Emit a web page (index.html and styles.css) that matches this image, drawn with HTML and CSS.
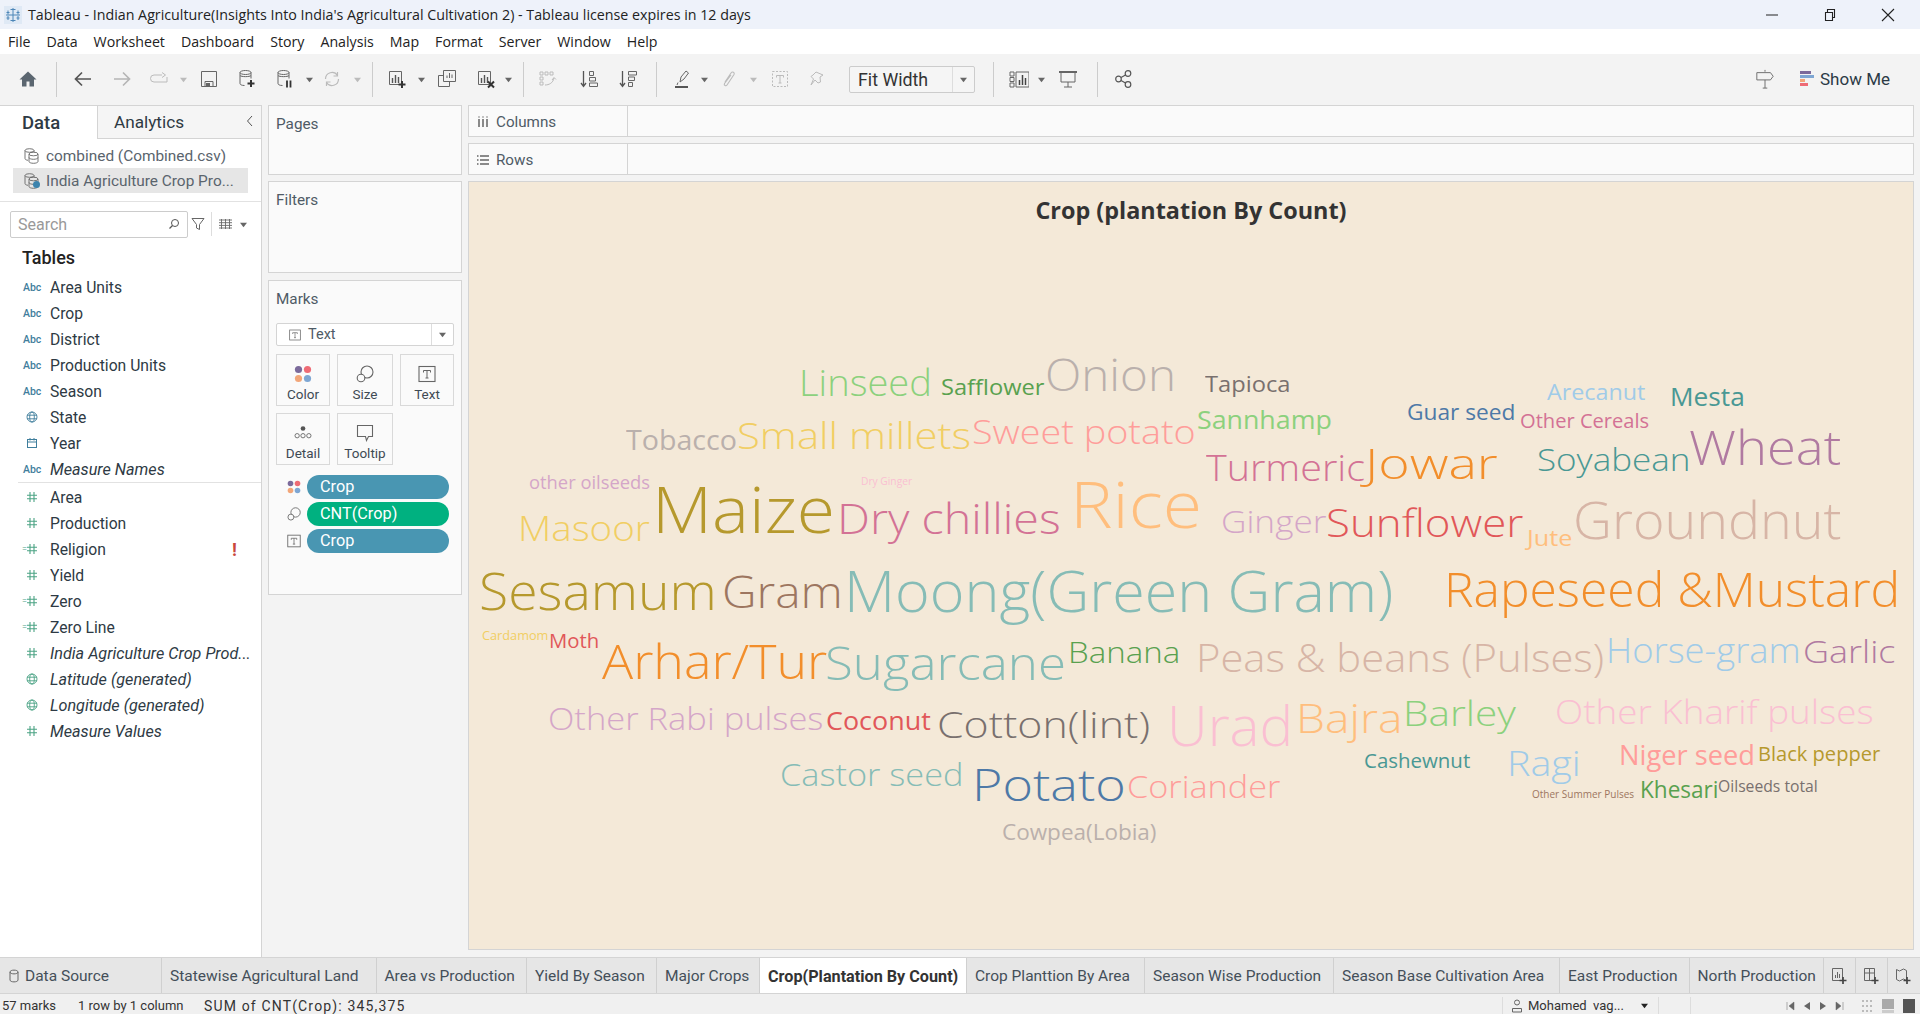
FILE: index.html
```html
<!DOCTYPE html>
<html lang="en">
<head>
    <meta charset="UTF-8">
    <title>Tableau - Indian Agriculture</title>
    <link rel="stylesheet" href="styles.css">
</head>
<body>
    <svg class="sprite" width="0" height="0">
        <symbol id="caret" viewBox="0 0 8 8"><path d="M0 2h8L4 7z"/></symbol>
        <symbol id="hash" viewBox="0 0 12 12"><path d="M4 1v10M8 1v10M1 4.2h10M1 7.8h10" fill="none" stroke="currentColor" stroke-width="1.1"/></symbol>
        <symbol id="globe" viewBox="0 0 12 12"><g fill="none" stroke="currentColor" stroke-width=".9"><circle cx="6" cy="6" r="5"/><ellipse cx="6" cy="6" rx="2.3" ry="5"/><path d="M1 4.2h10M1 7.8h10"/></g></symbol>
        <symbol id="cal" viewBox="0 0 12 12"><g fill="none" stroke="currentColor" stroke-width="1"><rect x="1.5" y="2.5" width="9" height="8"/><path d="M1.5 5h9M4 1v2.5M8 1v2.5"/></g></symbol>
        <symbol id="dots" viewBox="0 0 16 16"><circle cx="4" cy="4" r="3.2" fill="#7b6a9b"/><circle cx="12" cy="4" r="3.2" fill="#ee6b75"/><circle cx="4" cy="12" r="3.2" fill="#f2a679"/><circle cx="12" cy="12" r="3.2" fill="#7ea6d3"/></symbol>
        <symbol id="size" viewBox="0 0 18 18"><g fill="none" stroke="#666" stroke-width="1.1"><circle cx="11" cy="7" r="6"/><circle cx="5" cy="13" r="3.8" fill="#fafafa"/></g></symbol>
        <symbol id="tbox" viewBox="0 0 18 18"><rect x="1" y="1.5" width="16" height="15" fill="none" stroke="#666" stroke-width="1.1"/><path d="M5.5 5.5h7v2M9 5.500v7.500M7.500 13h3M5.500 5.500v2" fill="none" stroke="#666"/></symbol>
        <symbol id="db" viewBox="0 0 15 16"><g fill="none" stroke="currentColor" stroke-width=".9"><ellipse cx="5.500" cy="2.500" rx="4.500" ry="1.800"/><path d="M1 2.500v8c0 1 1.200 1.600 3 1.800M10 2.500v2"/><ellipse cx="9.500" cy="6" rx="4.500" ry="1.800"/><path d="M5 6v7.500c0 1 2 1.800 4.500 1.800s4.500-.8 4.500-1.800V6M5 9.500c0 1 2 1.800 4.500 1.800s4.500-.8 4.500-1.800"/></g></symbol>
    </svg>

    <div class="titlebar">
        <svg class="app-icon" viewBox="0 0 18 18"><rect width="18" height="18" fill="#dfe9f5"/><path d="M9 2v14M2 9h14M4 4.500v4M2.500 6.500h3M14 4.500v4M12.500 6.500h3M4 10v4M2.500 12h3M14 10v4M12.500 12h3M6.500 3.500h5M6.500 14.500h5" stroke="#4d86b8" fill="none"/></svg>
        <span class="app-title">Tableau - Indian Agriculture(Insights Into India's Agricultural Cultivation 2) - Tableau license expires in 12 days</span>
        <div class="win-controls">
            <svg viewBox="0 0 14 14"><path d="M1 7h12" stroke="#222"/></svg>
            <svg viewBox="0 0 14 14"><path d="M2.500 4.500h7v8h-7zM4.500 4.500v-3h7v8h-2" fill="none" stroke="#222" stroke-width="1.100"/></svg>
            <svg viewBox="0 0 14 14"><path d="M1 1l12 12M13 1L1 13" stroke="#222" stroke-width="1.100"/></svg>
        </div>
    </div>

    <div class="menubar">
        <span>File</span><span>Data</span><span>Worksheet</span><span>Dashboard</span><span>Story</span><span>Analysis</span><span>Map</span><span>Format</span><span>Server</span><span>Window</span><span>Help</span>
    </div>

    <div class="toolbar">
        <svg class="ti" viewBox="0 0 20 20"><path d="M10 2.500L1.500 10.500h2.500v7h4.500v-5h3v5h4.500v-7h2.500z" fill="#5b6670"/></svg>
        <i class="sep"></i>
        <svg class="ti" viewBox="0 0 20 20"><path d="M18 10H3M9 3.500L2.500 10 9 16.500" fill="none" stroke="#555" stroke-width="1.700"/></svg>
        <svg class="ti off" viewBox="0 0 20 20"><path d="M2 10h15M11 3.500l6.500 6.500-6.500 6.500" fill="none" stroke="#b5b5b5" stroke-width="1.700"/></svg>
        <svg class="ti" viewBox="0 0 20 20"><path d="M13 6H5a3.500 3.500 0 0 0 0 7h13V8M13 3.500L16.500 6 13 8.500" fill="none" stroke="#bbb"/></svg>
        <svg class="tc off"><use href="#caret"/></svg>
        <svg class="ti" viewBox="0 0 20 20"><path d="M2.500 2.500h15v15h-15zM6 17.500v-5h8v5" fill="none" stroke="#666"/><rect x="7" y="14" width="4" height="3" fill="#666"/></svg>
        <svg class="ti" viewBox="0 0 20 20"><g fill="none" stroke="#666"><ellipse cx="8.500" cy="3.500" rx="5.500" ry="2"/><path d="M3 3.500v11c0 1 1.500 2 4.500 2M14 3.500v6M3 6.500c1 1.500 10 1.500 11 0"/></g><path d="M14 11v7M10.500 14.500h7" stroke="#333" stroke-width="2"/></svg>
        <svg class="ti" viewBox="0 0 20 20"><g fill="none" stroke="#666"><ellipse cx="8.500" cy="3.500" rx="5.500" ry="2"/><path d="M3 3.500v11c0 1 1.500 2 4.500 2M14 3.500v6M3 6.500c1 1.500 10 1.500 11 0"/></g><path d="M12 11.500v7M15.500 11.500v7" stroke="#333" stroke-width="1.800"/></svg>
        <svg class="tc"><use href="#caret"/></svg>
        <svg class="ti off" viewBox="0 0 20 20"><path d="M3.500 10a6.500 6.500 0 0 1 12-3.500M16.500 10a6.500 6.500 0 0 1-12 3.500M15.500 3v4h-4M4.500 17v-4h4" fill="none" stroke="#bbb" stroke-width="1.200"/></svg>
        <svg class="tc off"><use href="#caret"/></svg>
        <i class="sep"></i>
        <svg class="ti" viewBox="0 0 20 20"><path d="M2.500 2.500h12v13h-12z" fill="none" stroke="#666"/><path d="M5.500 9v5M8.500 6v8M11.500 8v6" stroke="#555" stroke-width="1.400"/><path d="M15 12v7M11.500 15.500h7" stroke="#333" stroke-width="2"/></svg>
        <svg class="tc"><use href="#caret"/></svg>
        <svg class="ti" viewBox="0 0 20 20"><g fill="none" stroke="#666"><path d="M6.500 1.500h12v11h-12z"/><path d="M1.500 6.500h5M1.500 6.500v11h11v-5"/></g><path d="M10 9V6.500M12.500 9V4M15 9V5.500" stroke="#666"/></svg>
        <svg class="ti" viewBox="0 0 20 20"><path d="M2.500 2.500h12v13h-12z" fill="none" stroke="#666"/><path d="M5.500 9v5M8.500 6v8M11.500 8v6" stroke="#555" stroke-width="1.400"/><path d="M12 12.500l6 6M18 12.500l-6 6" stroke="#333" stroke-width="2"/></svg>
        <svg class="tc"><use href="#caret"/></svg>
        <i class="sep"></i>
        <svg class="ti off" viewBox="0 0 20 20"><path d="M3 3h3v3H3zM8 3h3v3H8zM13 3h3v3h-3zM3 8h3v3H3zM3 13h3v3H3zM8 16c4 0 8-2 9-7M15 11l2-2.500 2 2" fill="none" stroke="#bbb"/></svg>
        <svg class="ti" viewBox="0 0 20 20"><path d="M4.500 2v15M2 14l2.500 3.500L7 14" fill="none" stroke="#555" stroke-width="1.300"/><path d="M10.500 2.500h4v4h-4zM10.500 8.500h6v3.500h-6zM10.500 14h8v3.500h-8z" fill="none" stroke="#666"/></svg>
        <svg class="ti" viewBox="0 0 20 20"><path d="M4.500 2v15M2 14l2.500 3.500L7 14" fill="none" stroke="#555" stroke-width="1.300"/><path d="M10.500 2.500h8v3.500h-8zM10.500 8h6v3.500h-6zM10.500 13.500h4v4h-4z" fill="none" stroke="#666"/></svg>
        <i class="sep"></i>
        <svg class="ti" viewBox="0 0 20 20"><path d="M7 13l1-5 5-6 2.500 2-4.500 6zM5 13.500l-1 2.500" fill="none" stroke="#666"/><rect x="2" y="17" width="13" height="2" fill="#555"/></svg>
        <svg class="tc"><use href="#caret"/></svg>
        <svg class="ti" viewBox="0 0 20 20"><path d="M6 13l6-9c1.500-2 4-.5 3 1.500L8 16c-1 1.500-3.500.5-2.500-1.500L12 6" fill="none" stroke="#bbb" stroke-width="1.100"/></svg>
        <svg class="tc off"><use href="#caret"/></svg>
        <svg class="ti off" viewBox="0 0 20 20"><path d="M2.500 2.500h15v15h-15z" fill="none" stroke="#bbb" stroke-dasharray="2 1.500"/><path d="M6.500 6.500h7v2M10 6.500v7.500M8.500 14h3M6.500 6.500v2" fill="none" stroke="#bbb"/></svg>
        <svg class="ti off" viewBox="0 0 20 20"><path d="M9 3l7 3-3 2 .5 5-2.500 1-3-3-4 5 2.500-6-2.500-2.500 2-1.500z" fill="none" stroke="#bbb"/></svg>
        <div class="fit-box"><span>Fit Width</span><b><svg class="tc"><use href="#caret"/></svg></b></div>
        <i class="sep"></i>
        <svg class="ti" viewBox="0 0 20 20"><path d="M1 3h4v4H1zM1 8.500h4v4H1zM1 14h4v4H1zM7 3h13v15H7z" fill="none" stroke="#666"/><path d="M10.500 11v5M13.500 6v10M16.500 9v7" stroke="#444" stroke-width="1.500"/></svg>
        <svg class="tc"><use href="#caret"/></svg>
        <svg class="ti" viewBox="0 0 20 20"><path d="M1 3h18" stroke="#555" stroke-width="1.800"/><path d="M3 3v10h14V3M10 13v5M6 18h8" fill="none" stroke="#666"/></svg>
        <i class="sep"></i>
        <svg class="ti" viewBox="0 0 20 20"><g fill="none" stroke="#555" stroke-width="1.200"><circle cx="14" cy="4.500" r="2.800"/><circle cx="4.500" cy="10" r="2.800"/><circle cx="14" cy="15.500" r="2.800"/><path d="M7 8.500l4.500-2.500M7 11.500l4.500 2.500"/></g></svg>
        <div class="toolbar-right">
            <svg class="ti" viewBox="0 0 20 22"><path d="M10 1v2M1 4h15l3 4-3 4H1zM10 12v9M7.500 21h5" fill="none" stroke="#666"/></svg>
            <div class="showme">
                <div class="bars"><i class="b1"></i><i class="b2"></i><i class="b3"></i><i class="b4"></i></div>
                <span>Show Me</span>
            </div>
        </div>
    </div>

    <div class="main">
        <aside class="data-pane">
            <div class="pane-tabs">
                <div class="pane-tab active">Data</div>
                <div class="pane-tab">Analytics<svg class="chev" viewBox="0 0 8 12"><path d="M6 1L1.500 6 6 11" fill="none" stroke="#555"/></svg></div>
            </div>
            <div class="sources">
                <div class="source"><svg class="src-icon"><use href="#db"/></svg>combined (Combined.csv)</div>
                <div class="source selected"><svg class="src-icon"><use href="#db"/></svg><span class="src-check"></span>India Agriculture Crop Pro...</div>
            </div>
            <div class="search-row">
                <div class="search"><span>Search</span><svg viewBox="0 0 12 12"><circle cx="7" cy="5" r="3.500" fill="none" stroke="#555"/><path d="M4.500 7.500L1.500 10.500" stroke="#555" stroke-width="1.300"/></svg></div>
                <svg class="funnel" viewBox="0 0 14 14"><path d="M1 1.500h12L8.500 7.500v5l-3-1.500V7.500z" fill="none" stroke="#666"/></svg>
                <i class="vline"></i>
                <svg class="list-icon" viewBox="0 0 13 10"><path d="M0 1h13M0 3.700h13M0 6.400h13M0 9h13M2.500 0v10M6.500 0v10M10.500 0v10" stroke="#666" stroke-width=".9"/></svg>
                <svg class="tc"><use href="#caret"/></svg>
            </div>
            <h3 class="tables">Tables</h3>
            <ul class="fields dims">
                <li><span class="abc">Abc</span>Area Units</li>
                <li><span class="abc">Abc</span>Crop</li>
                <li><span class="abc">Abc</span>District</li>
                <li><span class="abc">Abc</span>Production Units</li>
                <li><span class="abc">Abc</span>Season</li>
                <li><svg class="fi blue"><use href="#globe"/></svg>State</li>
                <li><svg class="fi blue"><use href="#cal"/></svg>Year</li>
                <li class="it"><span class="abc">Abc</span>Measure Names</li>
            </ul>
            <ul class="fields meas">
                <li><svg class="fi"><use href="#hash"/></svg>Area</li>
                <li><svg class="fi"><use href="#hash"/></svg>Production</li>
                <li><span class="calc">=</span><svg class="fi"><use href="#hash"/></svg>Religion<span class="warn">!</span></li>
                <li><svg class="fi"><use href="#hash"/></svg>Yield</li>
                <li><span class="calc">=</span><svg class="fi"><use href="#hash"/></svg>Zero</li>
                <li><span class="calc">=</span><svg class="fi"><use href="#hash"/></svg>Zero Line</li>
                <li class="it"><svg class="fi"><use href="#hash"/></svg>India Agriculture Crop Prod...</li>
                <li class="it"><svg class="fi"><use href="#globe"/></svg>Latitude (generated)</li>
                <li class="it"><svg class="fi"><use href="#globe"/></svg>Longitude (generated)</li>
                <li class="it"><svg class="fi"><use href="#hash"/></svg>Measure Values</li>
            </ul>
        </aside>

        <section class="cards">
            <div class="card pages"><label>Pages</label></div>
            <div class="card filters"><label>Filters</label></div>
            <div class="card marks">
                <label>Marks</label>
                <div class="mark-type">
                    <svg viewBox="0 0 18 18"><use href="#tbox"/></svg>
                    <span>Text</span>
                    <b><svg class="tc"><use href="#caret"/></svg></b>
                </div>
                <div class="mark-btns">
                    <div class="mark-btn"><svg><use href="#dots"/></svg>Color</div>
                    <div class="mark-btn"><svg><use href="#size"/></svg>Size</div>
                    <div class="mark-btn"><svg><use href="#tbox"/></svg>Text</div>
                    <div class="mark-btn"><svg viewBox="0 0 20 18"><circle cx="10" cy="4" r="2.600" fill="#555"/><g fill="none" stroke="#666"><circle cx="3.500" cy="12" r="2.400"/><circle cx="10" cy="12" r="2.400"/><circle cx="16.500" cy="12" r="2.400"/></g></svg>Detail</div>
                    <div class="mark-btn"><svg viewBox="0 0 18 18"><path d="M1.500 1.500h15v11h-4l-2 4-1-4h-8z" fill="none" stroke="#666" stroke-width="1.100"/></svg>Tooltip</div>
                </div>
                <div class="pills">
                    <div class="pill-row"><svg><use href="#dots"/></svg><div class="pill blue-pill">Crop</div></div>
                    <div class="pill-row"><svg><use href="#size"/></svg><div class="pill green-pill">CNT(Crop)</div></div>
                    <div class="pill-row"><svg><use href="#tbox"/></svg><div class="pill blue-pill">Crop</div></div>
                </div>
            </div>
        </section>

        <section class="view">
            <div class="shelf"><div class="shelf-label"><svg viewBox="0 0 12 12"><path d="M2 3v8M6 3v8M10 3v8" stroke="#666" stroke-width="1.500"/><path d="M2 .5v1M6 .5v1M10 .5v1" stroke="#666" stroke-width="1.500"/></svg>Columns</div></div>
            <div class="shelf"><div class="shelf-label"><svg viewBox="0 0 12 12"><path d="M3 2h9M3 6h9M3 10h9" stroke="#666" stroke-width="1.300"/><path d="M0 2h1.500M0 6h1.500M0 10h1.500" stroke="#666" stroke-width="1.300"/></svg>Rows</div></div>
            <div class="canvas" id="canvas">
                <h2 class="viz-title">Crop (plantation By Count)</h2>
            </div>
        </section>
    </div>

    <div class="tabs">
        <div class="tab ds"><svg viewBox="0 0 10 14"><path d="M1 3v8c0 2.500 8 2.500 8 0V3c0-2.500-8-2.500-8 0zM1 3c0 2.500 8 2.500 8 0" fill="none" stroke="#666"/></svg>Data Source</div>
        <div class="tab">Statewise Agricultural Land</div>
        <div class="tab">Area vs Production</div>
        <div class="tab">Yield By Season</div>
        <div class="tab">Major Crops</div>
        <div class="tab active">Crop(Plantation By Count)</div>
        <div class="tab">Crop Planttion By Area</div>
        <div class="tab">Season Wise Production</div>
        <div class="tab">Season Base Cultivation Area</div>
        <div class="tab">East Production</div>
        <div class="tab">North Production</div>
        <div class="tab add"><svg viewBox="0 0 18 18"><path d="M2.500 1.500h10v12h-10z" fill="none" stroke="#666"/><path d="M5.500 8v3M7.500 5v6M9.500 7v4" stroke="#666"/><path d="M13 10v7M9.500 13.500h7" stroke="#444" stroke-width="1.700"/></svg></div>
        <div class="tab add"><svg viewBox="0 0 18 18"><path d="M2.500 1.500h10v12h-10zM2.500 6h10M7.500 1.500v12" fill="none" stroke="#666"/><path d="M13 10v7M9.500 13.500h7" stroke="#444" stroke-width="1.700"/></svg></div>
        <div class="tab add"><svg viewBox="0 0 18 18"><path d="M2.500 2.500l3 1.500 4-2 3 1.500v10l-3-1.500-4 2-3-1.500z" fill="none" stroke="#666"/><path d="M13 10v7M9.500 13.500h7" stroke="#444" stroke-width="1.700"/></svg></div>
    </div>

    <div class="statusbar">
        <span class="st-marks">57 marks</span>
        <span class="st-rows">1 row by 1 column</span>
        <span class="st-sum">SUM of CNT(Crop): 345,375</span>
        <div class="st-user">
            <svg viewBox="0 0 12 14"><circle cx="6" cy="3.500" r="2.500" fill="none" stroke="#666"/><path d="M1.500 13V9.500h9V13z" fill="none" stroke="#666"/></svg>
            <span>Mohamed &nbsp;vag...</span>
            <svg class="tc dark"><use href="#caret"/></svg>
        </div>
        <div class="st-cell"></div>
        <div class="st-cell"></div>
        <div class="st-nav">
            <svg viewBox="0 0 10 10"><path d="M2 1v8M9 1L4 5l5 4z" fill="#666" stroke="#666" stroke-width=".5"/></svg>
            <svg viewBox="0 0 10 10"><path d="M8 1L2 5l6 4z" fill="#666"/></svg>
            <svg viewBox="0 0 10 10"><path d="M2 1l6 4-6 4z" fill="#666"/></svg>
            <svg viewBox="0 0 10 10"><path d="M8 1v8M1 1l5 4-5 4z" fill="#666" stroke="#666" stroke-width=".5"/></svg>
        </div>
        <div class="st-views">
            <svg viewBox="0 0 12 14"><path d="M1 1h2v2H1zM5 1h2v2H5zM9 1h2v2H9zM1 6h2v2H1zM5 6h2v2H5zM9 6h2v2H9zM1 11h2v2H1zM5 11h2v2H5zM9 11h2v2H9z" fill="#bbb"/></svg>
            <svg viewBox="0 0 12 14"><rect x="0" y="0" width="12" height="10" fill="#aaa"/><rect x="0" y="11" width="12" height="3" fill="#ccc"/></svg>
            <svg viewBox="0 0 12 14"><rect width="12" height="14" fill="#555"/></svg>
        </div>
    </div>

    <script src="words.js"></script>
</body>
</html>
```

FILE: styles.css
```css
* {
    box-sizing: border-box;
}
html, body {
    height: 100%;
}
body {
    margin: 0;
    width: 1920px;
    height: 1014px;
    overflow: hidden;
    display: flex;
    flex-direction: column;
    font-family: 'Roboto', 'Liberation Sans', sans-serif;
    font-size: 15.700px;
    color: #2e3a44;
    background: #f3f3f3;
}
ul {
    list-style: none;
    margin: 0;
    padding: 0;
}
.sprite {
    position: absolute;
}

/* title + menu */
.titlebar {
    height: 29px;
    display: flex;
    align-items: center;
    background: #eef2fa;
    padding-left: 4px;
    font-family: 'Open Sans', sans-serif;
    font-size: 14.250px;
    color: #222;
}
.app-icon {
    width: 18px;
    height: 18px;
    margin-right: 6px;
}
.win-controls {
    margin-left: auto;
    display: flex;
    gap: 44px;
    padding-right: 25px;
}
.win-controls svg {
    width: 14px;
    height: 14px;
}
.menubar {
    height: 25px;
    background: #fff;
    display: flex;
    align-items: center;
    gap: 16px;
    padding-left: 8px;
    font-family: 'Open Sans', sans-serif;
    font-size: 14.200px;
    color: #222;
}

/* toolbar, one track per icon */
.toolbar {
    height: 51px;
    padding: 0 0 1px 8px;
    display: grid;
    align-items: center;
    justify-items: center;
    grid-template-columns: 40px 17px 36px 42px 32px 16px 36px 40px 36px 12px 34px 16px 14px 36px 12px 40px 38px 6px 24px 24px 60px 18px 38px 16px 26px 24px 24px 30px 44px 146px 16px 36px 8px 46px 12px 42px 1fr;
    background: #f3f3f3;
}
.ti {
    width: 20px;
    height: 20px;
}
.tc {
    width: 7px;
    height: 7px;
    fill: #666;
}
.tc.off {
    fill: #bbb;
}
.tc.dark {
    fill: #222;
}
.sep {
    display: block;
    width: 1px;
    height: 35px;
    background: #ccc;
}
.fit-box {
    width: 126px;
    height: 27px;
    display: flex;
    align-items: center;
    background: #f5f5f5;
    border: 1px solid #ccc;
    border-radius: 2px;
    font-size: 17.800px;
    color: #333;
}
.fit-box span {
    flex: 1;
    padding-left: 8px;
}
.fit-box b {
    width: 22px;
    height: 100%;
    display: flex;
    align-items: center;
    justify-content: center;
    border-left: 1px solid #ddd;
}
.toolbar-right {
    justify-self: end;
    display: flex;
    align-items: center;
    padding-right: 30px;
}
.showme {
    display: flex;
    align-items: center;
    gap: 6px;
    margin-left: 25px;
    font-size: 17px;
    color: #2c3a46;
}
.bars {
    width: 14px;
}
.bars i {
    display: block;
    height: 3px;
    margin-bottom: 1px;
}
.bars .b1 { width: 11px; background: #7b6a9b; }
.bars .b2 { width: 14px; background: #7ea6d3; }
.bars .b3 { width: 5px; background: #f2a679; }
.bars .b4 { width: 8px; background: #ee6b75; }

/* main area */
.main {
    flex: 1;
    min-height: 0;
    display: flex;
}
.data-pane {
    width: 262px;
    background: #fff;
    border-right: 1px solid #d4d4d4;
    border-top: 1px solid #d4d4d4;
}
.pane-tabs {
    display: flex;
    height: 33px;
}
.pane-tab {
    display: flex;
    align-items: center;
    font-size: 17.200px;
    background: #f5f5f5;
    border-bottom: 1px solid #d4d4d4;
    flex: 1;
    padding-left: 16px;
    position: relative;
}
.pane-tab.active {
    flex: 0 0 98px;
    padding-left: 22px;
    background: #fff;
    font-size: 18.500px;
    font-weight: 500;
    border-bottom: 0;
    border-right: 1px solid #d4d4d4;
}
.chev {
    position: absolute;
    right: 7px;
    top: 9px;
    width: 8px;
    height: 12px;
}
.sources {
    padding: 4px 13px 8px;
    border-bottom: 1px solid #e2e2e2;
}
.source {
    height: 25px;
    display: flex;
    align-items: center;
    color: #5a646d;
    font-size: 15.400px;
    position: relative;
    white-space: nowrap;
}
.source.selected {
    background: #e6e6e6;
}
.src-icon {
    width: 15px;
    height: 16px;
    margin: 0 7px 0 11px;
    color: #666;
}
.src-check {
    position: absolute;
    left: 20px;
    top: 13px;
    width: 7px;
    height: 7px;
    border-radius: 50%;
    background: #3c83ad;
}
.search-row {
    display: flex;
    align-items: center;
    padding: 8px 0 0 10px;
    height: 36px;
}
.search {
    width: 178px;
    height: 27px;
    display: flex;
    align-items: center;
    justify-content: space-between;
    padding: 0 7px;
    border: 1px solid #ccc;
    border-radius: 2px;
    color: #999;
    font-size: 16px;
}
.search svg {
    width: 12px;
    height: 12px;
}
.funnel {
    width: 14px;
    height: 14px;
    margin-left: 3px;
}
.vline {
    width: 1px;
    height: 24px;
    background: #ddd;
    margin: 0 7px 0 6px;
}
.list-icon {
    width: 13px;
    height: 10px;
    margin-right: 8px;
}
.tables {
    margin: 10px 0 6px 22px;
    font-size: 18px;
    line-height: 20px;
    font-weight: 500;
    color: #222;
}
.fields li {
    height: 26px;
    display: flex;
    align-items: center;
    position: relative;
    padding-left: 50px;
    white-space: nowrap;
}
.fields .it {
    font-style: italic;
    font-size: 16.200px;
}
.dims {
    border-bottom: 1px solid #e2e2e2;
    margin-left: 18px;
}
.dims li {
    margin-left: -18px;
}
.meas {
    padding-top: 1px;
}
.abc {
    position: absolute;
    left: 23px;
    font-size: 10.500px;
    font-style: normal;
    font-weight: 500;
    color: #3f7e9c;
}
.fi {
    position: absolute;
    left: 26px;
    width: 12px;
    height: 12px;
    color: #4ba384;
}
.fi.blue {
    color: #3f7e9c;
}
.calc {
    position: absolute;
    left: 22px;
    font-size: 9px;
    font-style: normal;
    color: #4ba384;
}
.warn {
    position: absolute;
    left: 232px;
    font-size: 18px;
    font-weight: 700;
    color: #c9473c;
}

/* cards column */
.cards {
    width: 194px;
    margin-left: 6px;
    display: flex;
    flex-direction: column;
    gap: 6px;
}
.card {
    background: #fafafa;
    border: 1px solid #d4d4d4;
    padding: 9px 7px;
}
.card label {
    display: block;
    font-size: 15.300px;
    line-height: 18px;
    color: #4f5b66;
}
.pages {
    height: 70px;
}
.filters {
    height: 92px;
}
.marks {
    height: 315px;
    margin-top: 1px;
}
.mark-type {
    margin-top: 15px;
    height: 23px;
    display: flex;
    align-items: center;
    border: 1px solid #d4d4d4;
    border-radius: 2px;
    background: #fff;
    font-size: 14.500px;
    color: #4f5b66;
}
.mark-type > svg {
    width: 12px;
    height: 12px;
    margin: 0 7px 0 12px;
}
.mark-type span {
    flex: 1;
}
.mark-type b {
    width: 22px;
    height: 100%;
    display: flex;
    align-items: center;
    justify-content: center;
    border-left: 1px solid #ddd;
}
.mark-btns {
    margin-top: 8px;
    display: grid;
    grid-template-columns: 54px 56px 54px;
    grid-auto-rows: 52px;
    column-gap: 7px;
    row-gap: 7px;
}
.mark-btn {
    border: 1px solid #d9d9d9;
    display: flex;
    flex-direction: column;
    align-items: center;
    justify-content: flex-end;
    gap: 3px;
    padding-bottom: 3px;
    font-size: 13.500px;
    color: #3f4a54;
}
.mark-btn svg {
    width: 18px;
    height: 18px;
}
.pills {
    margin-top: 10px;
    display: flex;
    flex-direction: column;
    gap: 3px;
}
.pill-row {
    display: flex;
    align-items: center;
    padding-left: 11px;
}
.pill-row svg {
    width: 14px;
    height: 14px;
    margin-right: 6px;
}
.pill {
    width: 142px;
    height: 24px;
    line-height: 24px;
    border-radius: 12px;
    padding-left: 13px;
    color: #fff;
    font-size: 16.300px;
}
.blue-pill {
    background: #4996b2;
}
.green-pill {
    background: #00b180;
}

/* shelves + view */
.view {
    flex: 1;
    margin: 0 6px 7px 6px;
    display: flex;
    flex-direction: column;
    gap: 6px;
    min-width: 0;
}
.shelf {
    height: 32px;
    background: #fafafa;
    border: 1px solid #d4d4d4;
    flex: none;
}
.shelf-label {
    width: 159px;
    height: 100%;
    display: flex;
    align-items: center;
    gap: 7px;
    padding: 1px 0 0 8px;
    border-right: 1px solid #d4d4d4;
    font-size: 15.200px;
    color: #4f5b66;
}
.shelf-label svg {
    width: 12px;
    height: 12px;
}
.canvas {
    flex: 1;
    position: relative;
    background: #f4e9d8;
    border: 1px solid #d4d4d4;
    overflow: hidden;
}
.viz-title {
    margin: 13px 0 0;
    text-align: center;
    font-family: 'Open Sans', sans-serif;
    font-size: 23.400px;
    line-height: 30px;
    font-weight: 700;
    color: #333;
}
.word {
    position: absolute;
    font-family: 'Open Sans', sans-serif;
    font-weight: 300;
    line-height: 1;
    white-space: nowrap;
    transform-origin: left center;
}
.word.small {
    font-weight: 400;
}

/* sheet tabs */
.tabs {
    height: 37px;
    display: grid;
    grid-template-columns: 162px 214.500px 150.500px 130px 103px 207px 178px 189px 226px 129.500px 134px 32px 32px 33px;
    background: #e6e6e6;
    border-top: 1px solid #d4d4d4;
    border-bottom: 1px solid #d4d4d4;
}
.tab {
    display: flex;
    align-items: center;
    padding: 1px 0 0 8px;
    border-right: 1px solid #d0d0d0;
    color: #444f59;
    white-space: nowrap;
    font-size: 15.500px;
}
.tab.active {
    background: #fff;
    font-size: 16.200px;
    font-weight: 700;
    color: #333;
}
.tab.ds {
    padding-left: 9px;
}
.tab.ds svg {
    width: 10px;
    height: 14px;
    margin-right: 6px;
}
.tab.add {
    padding-left: 6px;
}
.tab.add svg {
    width: 18px;
    height: 18px;
}

/* status bar */
.statusbar {
    height: 20px;
    padding-top: 3px;
    display: flex;
    align-items: center;
    background: #f0f0f0;
    font-size: 13px;
    color: #333;
    white-space: nowrap;
}
.st-marks {
    width: 78px;
    padding-left: 2px;
}
.st-rows {
    width: 126px;
}
.st-sum {
    width: 1298px;
    font-size: 14px;
    letter-spacing: 1.150px;
}
.st-user {
    width: 156px;
    height: 100%;
    display: flex;
    align-items: center;
    padding-left: 8px;
    border-left: 1px solid #ddd;
}
.st-user svg:first-child {
    width: 12px;
    height: 14px;
    margin-right: 5px;
}
.st-user span {
    flex: 1;
}
.st-user .tc {
    margin-right: 10px;
}
.st-cell {
    width: 32px;
    height: 100%;
    border-left: 1px solid #ddd;
}
.st-nav {
    display: flex;
    gap: 6.500px;
    margin-left: 63px;
}
.st-nav svg {
    width: 10px;
    height: 10px;
}
.st-views {
    display: flex;
    gap: 9px;
    margin-left: 16px;
}
.st-views svg {
    width: 12px;
    height: 14px;
}
```

FILE: words.js
```js
// word cloud marks: text, left, right, baseline, font size, colour (page coordinates)
const words = [
    ['Linseed', 801, 930, 396, 36, '#8cd17d'],
    ['Safflower', 942, 1043, 395, 22.5, '#59a14f'],
    ['Onion', 1047, 1173, 390, 45, '#bab0ac'],
    ['Tapioca', 1206, 1289, 392, 22.5, '#79706e'],
    ['Arecanut', 1548, 1644, 399, 21.5, '#a0cbe8'],
    ['Mesta', 1671, 1743, 405, 25, '#499894'],
    ['Guar seed', 1408, 1514, 419, 22, '#4e79a7'],
    ['Other Cereals', 1521, 1648, 428, 20, '#d37295'],
    ['Sannhamp', 1198, 1330, 429, 25.5, '#8cd17d'],
    ['Tobacco', 627, 735, 449, 27, '#bab0ac'],
    ['Small millets', 739, 969, 449, 36, '#f1ce63'],
    ['Sweet potato', 974, 1194, 443, 33, '#ff9d9a'],
    ['Turmeric', 1208, 1363, 481, 36, '#d37295'],
    ['Jowar', 1367, 1495, 478, 43, '#f28e2b'],
    ['Soyabean', 1539, 1689, 470, 32, '#499894'],
    ['Wheat', 1692, 1839, 465, 48, '#b07aa1'],
    ['other oilseeds', 530, 649, 488, 18.5, '#d4a6c8'],
    ['Dry Ginger', 862, 912, 484, 10, '#fabfd2'],
    ['Maize', 656, 832, 533, 64, '#b6992d'],
    ['Dry chillies', 839, 1058, 533, 42, '#d37295'],
    ['Rice', 1074, 1199, 528, 65, '#ffbe7d'],
    ['Masoor', 520, 648, 540, 34, '#f1ce63'],
    ['Ginger', 1223, 1325, 533, 31, '#d4a6c8'],
    ['Sunflower', 1328, 1521, 536, 39, '#e15759'],
    ['Jute', 1528, 1571, 546, 21, '#ffbe7d'],
    ['Groundnut', 1576, 1839, 538, 51, '#d7b5a6'],
    ['Sesamum', 482, 714, 609, 52, '#b6992d'],
    ['Gram', 724, 840, 607, 44, '#9d7660'],
    ['Moong(Green Gram)', 847, 1390, 612, 57, '#86bcb6'],
    ['Rapeseed &Mustard', 1447, 1898, 607, 47, '#f28e2b'],
    ['Cardamom', 483, 548, 640, 12.5, '#f1ce63'],
    ['Moth', 550, 598, 647, 19.5, '#e15759'],
    ['Arhar/Tur', 605, 825, 679, 48, '#f28e2b'],
    ['Sugarcane', 828, 1064, 679, 46, '#86bcb6'],
    ['Banana', 1070, 1179, 663, 30, '#59a14f'],
    ['Peas & beans (Pulses)', 1198, 1602, 671, 38, '#d7b5a6'],
    ['Horse-gram', 1608, 1799, 662, 34, '#a0cbe8'],
    ['Garlic', 1805, 1894, 663, 31, '#b07aa1'],
    ['Other Rabi pulses', 550, 822, 730, 31, '#d4a6c8'],
    ['Coconut', 827, 929, 729, 25, '#e15759'],
    ['Cotton(lint)', 939, 1148, 737, 37, '#79706e'],
    ['Urad', 1170, 1290, 745, 56, '#fabfd2'],
    ['Bajra', 1298, 1400, 733, 40, '#ffbe7d'],
    ['Barley', 1405, 1514, 725, 35, '#8cd17d'],
    ['Other Kharif pulses', 1557, 1872, 723, 33, '#fabfd2'],
    ['Cashewnut', 1365, 1469, 768, 20, '#499894'],
    ['Ragi', 1509, 1579, 775, 34, '#a0cbe8'],
    ['Niger seed', 1620, 1753, 764, 27, '#ff9d9a'],
    ['Black pepper', 1759, 1879, 761, 20, '#b6992d'],
    ['Castor seed', 782, 962, 786, 31, '#86bcb6'],
    ['Potato', 974, 1123, 800, 44, '#4e79a7'],
    ['Coriander', 1129, 1279, 798, 31, '#ff9d9a'],
    ['Other Summer Pulses', 1533, 1634, 797, 10, '#9d7660'],
    ['Khesari', 1641, 1717, 797, 23, '#59a14f'],
    ['Oilseeds total', 1719, 1817, 791, 16, '#79706e'],
    ['Cowpea(Lobia)', 1003, 1155, 840, 22.5, '#bab0ac'],
];

const canvas = document.getElementById('canvas');
const box = canvas.getBoundingClientRect();

words.forEach(([text, left, right, baseline, size, color]) => {
    const el = document.createElement('span');
    // side bearings: the box is a bit wider than the ink measured on the reference
    const bearing = size * 0.055;
    el.className = size < 28 ? 'word small' : 'word';
    el.textContent = text;
    el.style.color = color;
    el.style.fontSize = size + 'px';
    el.style.left = (left - bearing - box.left - 1) + 'px';
    // Open Sans baseline sits .888em below the top of a line-height:1 box
    el.style.top = (baseline - box.top - size * 0.888) + 'px';
    canvas.appendChild(el);
    // squeeze to the measured width of the mark
    el.style.transform = `scaleX(${(right - left + bearing * 2) / el.getBoundingClientRect().width})`;
});
```
